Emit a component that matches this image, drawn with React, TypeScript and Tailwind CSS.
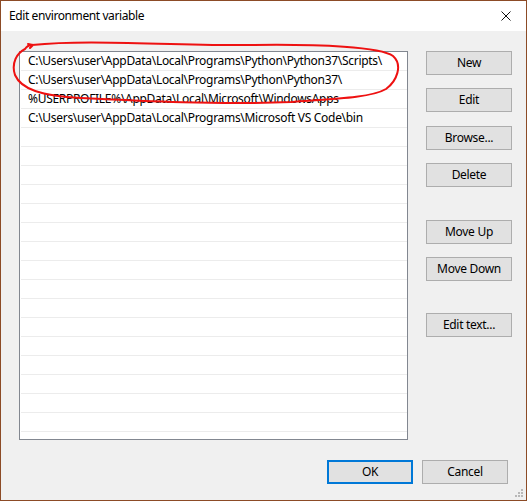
import React from "react";

const paths = [
  "C:\\Users\\user\\AppData\\Local\\Programs\\Python\\Python37\\Scripts\\",
  "C:\\Users\\user\\AppData\\Local\\Programs\\Python\\Python37\\",
  "%USERPROFILE%\\AppData\\Local\\Microsoft\\WindowsApps",
  "C:\\Users\\user\\AppData\\Local\\Programs\\Microsoft VS Code\\bin",
];

function Btn({ label, className = "", primary = false }: { label: string; className?: string; primary?: boolean }) {
  return (
    <button
      className={
        "w-[86px] h-[24px] bg-[#e1e1e1] text-[12px] tracking-[-0.3px] text-black flex items-center justify-center " +
        (primary ? "border-2 border-[#0078d7] " : "border border-[#adadad] ") +
        className
      }
    >
      {label}
    </button>
  );
}

export default function App() {
  const rows = Array.from({ length: 20 }, (_, i) => paths[i] ?? "");

  return (
    <div
      className="relative w-[527px] h-[501px] border border-[#8c4b26] bg-[#f0f0f0] flex flex-col overflow-hidden"
      style={{ fontFamily: '"Noto Sans", "Open Sans", sans-serif' }}
    >
      {/* title bar */}
      <div className="h-[30px] bg-white flex items-center justify-between pl-[8px] pr-[15px] shrink-0">
        <span className="text-[12px] tracking-[-0.4px] text-black">Edit environment variable</span>
        <svg width="10" height="10" viewBox="0 0 10 10">
          <path d="M0.5 0.5 L9.5 9.5 M9.5 0.5 L0.5 9.5" stroke="#111" strokeWidth="1" />
        </svg>
      </div>

      {/* body */}
      <div className="flex pt-[20px] pl-[18px]">
        <div className="w-[389px] h-[389px] border border-[#828790] bg-white overflow-hidden">
          {rows.map((p, i) => (
            <div
              key={i}
              className="h-[19px] ml-px border-b border-[#ececec] pl-[7px] flex items-center text-[12px] tracking-[-0.3px] text-black whitespace-nowrap leading-none"
            >
              {p}
            </div>
          ))}
        </div>

        <div className="ml-[18px] flex flex-col">
          <Btn label="New" />
          <Btn label="Edit" className="mt-[13px]" />
          <Btn label="Browse..." className="mt-[14px]" />
          <Btn label="Delete" className="mt-[13px]" />
          <Btn label="Move Up" className="mt-[33px]" />
          <Btn label="Move Down" className="mt-[13px]" />
          <Btn label="Edit text..." className="mt-[32px]" />
        </div>
      </div>

      {/* footer */}
      <div className="flex justify-end gap-[9px] pr-[18px] mt-[20px]">
        <Btn label="OK" primary className="w-[85px]" />
        <Btn label="Cancel" />
      </div>

      {/* resize grip */}
      <svg className="absolute right-[3px] bottom-[3px]" width="8" height="8" viewBox="0 0 8 8">
        {[
          [6, 0], [3, 3], [6, 3], [0, 6], [3, 6], [6, 6],
        ].map(([x, y], i) => (
          <rect key={i} x={x} y={y} width="2" height="2" fill="#b8b8b8" />
        ))}
      </svg>

      {/* red hand-drawn annotation */}
      <svg className="absolute left-0 top-0 pointer-events-none" width="527" height="501">
        <path
          d="M24 48 C26 45 28 44 31 44 M27 43 L32 44 L29 47 M31 44 C90 38 170 45 250 44 C320 43 380 46 392 55 C402 64 396 80 385 88 C370 97 330 98 290 101 C220 104 140 100 80 97 C40 95 20 88 14 74 C10 62 16 52 24 48"
          fill="none"
          stroke="#ee1111"
          strokeWidth="2"
          strokeLinecap="round"
          strokeLinejoin="round"
        />
      </svg>
    </div>
  );
}
